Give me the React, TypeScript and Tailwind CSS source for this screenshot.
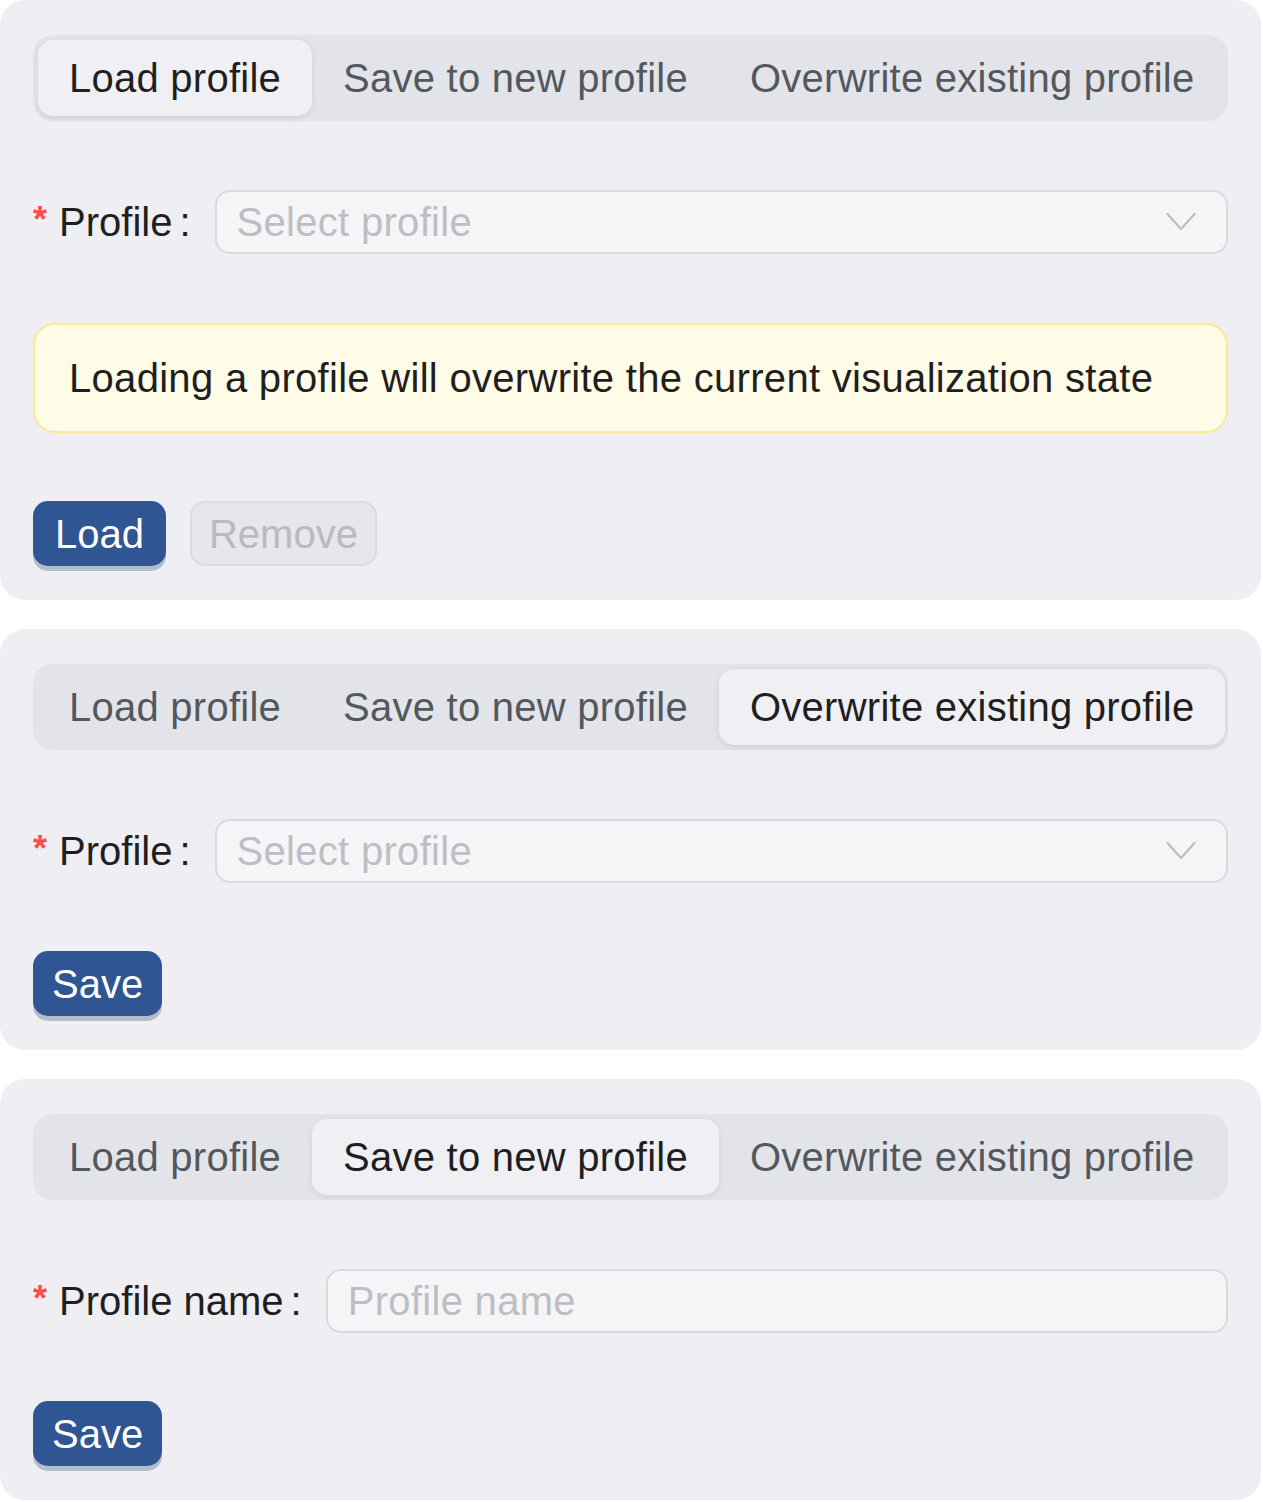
import React from 'react';

type TabKey = 'load' | 'save' | 'overwrite';

const tabs: { key: TabKey; label: string }[] = [
    { key: 'load', label: 'Load profile' },
    { key: 'save', label: 'Save to new profile' },
    { key: 'overwrite', label: 'Overwrite existing profile' },
];

const Segmented: React.FC<{ active: TabKey }> = ({ active }) => (
    <div className="flex h-[86px] items-center whitespace-nowrap rounded-[20px] bg-[#e3e4e9] p-[5px] tracking-[0.25px]">
        {tabs.map((t) => (
            <div
                key={t.key}
                className={
                    t.key === active
                        ? 'flex h-full shrink-0 items-center rounded-[15px] bg-[#f0f0f4] px-[31px] text-[#1f1f1f] shadow-[0_2px_6px_rgba(0,0,0,0.09)]'
                        : 'flex h-full shrink-0 items-center rounded-[15px] px-[31px] text-[#54585e]'
                }
            >
                {t.label}
            </div>
        ))}
    </div>
);

const Chevron: React.FC = () => (
    <svg width="30" height="20" viewBox="0 0 30 20" fill="none" className="shrink-0">
        <path d="M1.5 2 L15 17 L28.5 2" stroke="#bdbdc2" strokeWidth="2.2" strokeLinecap="round" strokeLinejoin="round" />
    </svg>
);

const FormRow: React.FC<{ label: string; placeholder: string; select?: boolean }> = ({ label, placeholder, select }) => (
    <div className="mt-[69px] flex h-[64px] items-center whitespace-nowrap">
        <div className="flex items-center text-[#1f1f1f]">
            <span className="mr-[12px] -translate-y-[2px] text-[36px] font-bold leading-none text-[#ff4d4f]">*</span>
            <span>{label}</span>
            <span className="ml-[7px] mr-[24px]">:</span>
        </div>
        <div className="flex h-full flex-1 items-center justify-between rounded-[15px] border-[2.5px] border-[#d9d9de] bg-[#f5f5f8] pl-[20px] pr-[30px]">
            <span className="tracking-[0.3px] text-[#bdbdc2]">{placeholder}</span>
            {select && <Chevron />}
        </div>
    </div>
);

const PrimaryButton: React.FC<{ children: React.ReactNode; px?: string }> = ({ children, px = 'px-[22px]' }) => (
    <button className={`flex h-[65px] items-center rounded-[15px] bg-[#2f5592] text-white shadow-[0_5px_0_#b4bdcc] ${px}`}>
        {children}
    </button>
);

const Panel: React.FC<{ children: React.ReactNode }> = ({ children }) => (
    <section className="w-[1261px] rounded-[25px] bg-[#eeeef3] px-[33px] pt-[35px] pb-[34px]">{children}</section>
);

export default function App() {
    return (
        <div className="flex min-h-[1502px] flex-col gap-[29px] bg-white text-[40px] leading-none" style={{ fontFamily: '"Liberation Sans", Arial, sans-serif' }}>
            <Panel>
                <Segmented active="load" />
                <FormRow label="Profile" placeholder="Select profile" select />
                <div className="mt-[69px] flex h-[110px] items-center whitespace-nowrap rounded-[22px] border-[2.5px] border-[#fde792] bg-[#fefbe7] px-[34px] tracking-[0.3px] text-[#1f1f1f]">
                    Loading a profile will overwrite the current visualization state
                </div>
                <div className="mt-[68px] flex gap-[24px]">
                    <PrimaryButton>Load</PrimaryButton>
                    <button className="flex h-[65px] items-center rounded-[15px] border-[2.5px] border-[#dadadf] bg-[#e6e6eb] px-[17px] text-[#b9b9be]">
                        Remove
                    </button>
                </div>
            </Panel>
            <Panel>
                <Segmented active="overwrite" />
                <FormRow label="Profile" placeholder="Select profile" select />
                <div className="mt-[68px] flex">
                    <PrimaryButton px="px-[19px]">Save</PrimaryButton>
                </div>
            </Panel>
            <Panel>
                <Segmented active="save" />
                <FormRow label="Profile name" placeholder="Profile name" />
                <div className="mt-[68px] flex">
                    <PrimaryButton px="px-[19px]">Save</PrimaryButton>
                </div>
            </Panel>
        </div>
    );
}
